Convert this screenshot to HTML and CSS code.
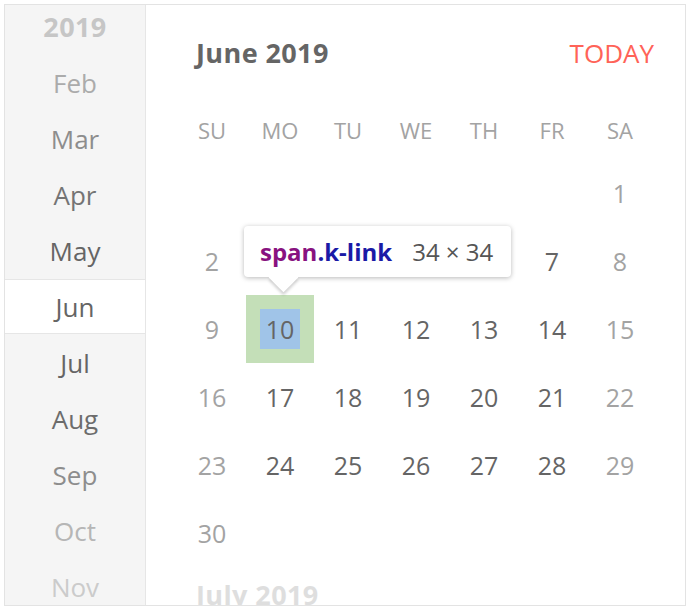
FILE: index.html
```html
<!DOCTYPE html>
<html lang="en">
<head>
<meta charset="utf-8">
<title>Calendar</title>
<link rel="stylesheet" href="styles.css">
</head>
<body>
<div class="calendar">
  <div class="nav">
    <div class="nav-highlight"></div>
    <ul class="nav-list">
      <li class="nav-item year f1">2019</li>
      <li class="nav-item f2">Feb</li>
      <li class="nav-item f3">Mar</li>
      <li class="nav-item f4">Apr</li>
      <li class="nav-item f5">May</li>
      <li class="nav-item f5">Jun</li>
      <li class="nav-item f5">Jul</li>
      <li class="nav-item f6">Aug</li>
      <li class="nav-item f3">Sep</li>
      <li class="nav-item f7">Oct</li>
      <li class="nav-item f8">Nov</li>
    </ul>
  </div>
  <div class="main">
    <div class="header">
      <span class="title">June 2019</span>
      <span class="today">TODAY</span>
    </div>
    <div class="weekdays">
      <span>SU</span><span>MO</span><span>TU</span><span>WE</span><span>TH</span><span>FR</span><span>SA</span>
    </div>
    <div class="days">
      <span class="cell"></span><span class="cell"></span><span class="cell"></span><span class="cell"></span><span class="cell"></span><span class="cell"></span><span class="cell we"><span class="link">1</span></span>
      <span class="cell we"><span class="link">2</span></span><span class="cell"><span class="link">3</span></span><span class="cell"><span class="link">4</span></span><span class="cell"><span class="link">5</span></span><span class="cell"><span class="link">6</span></span><span class="cell"><span class="link">7</span></span><span class="cell we"><span class="link">8</span></span>
      <span class="cell we"><span class="link">9</span></span><span class="cell inspected"><span class="link">10</span></span><span class="cell"><span class="link">11</span></span><span class="cell"><span class="link">12</span></span><span class="cell"><span class="link">13</span></span><span class="cell"><span class="link">14</span></span><span class="cell we"><span class="link">15</span></span>
      <span class="cell we"><span class="link">16</span></span><span class="cell"><span class="link">17</span></span><span class="cell"><span class="link">18</span></span><span class="cell"><span class="link">19</span></span><span class="cell"><span class="link">20</span></span><span class="cell"><span class="link">21</span></span><span class="cell we"><span class="link">22</span></span>
      <span class="cell we"><span class="link">23</span></span><span class="cell"><span class="link">24</span></span><span class="cell"><span class="link">25</span></span><span class="cell"><span class="link">26</span></span><span class="cell"><span class="link">27</span></span><span class="cell"><span class="link">28</span></span><span class="cell we"><span class="link">29</span></span>
      <span class="cell we"><span class="link">30</span></span>
    </div>
    <div class="next-title">July 2019</div>
  </div>
  <div class="tooltip">
    <span class="tag">span</span><span class="cls">.k-link</span><span class="size">34 × 34</span>
  </div>
</div>
</body>
</html>
```
FILE: styles.css
```css
* { box-sizing: border-box; }
html, body { background: #ffffff; }
body {
  margin: 0;
  padding: 4px;
  font-family: "Open Sans", "Noto Sans", sans-serif;
  color: #656565;
}
.calendar {
  position: relative;
  width: 682px;
  height: 602px;
  border: 1px solid #e3e3e3;
  display: flex;
  overflow: hidden;
  background: #fff;
}
.nav {
  position: relative;
  width: 141px;
  flex: none;
  background: #f5f5f5;
  border-right: 1px solid #e6e6e6;
  overflow: hidden;
}
.nav-highlight {
  position: absolute;
  left: 0;
  top: 274px;
  width: 141px;
  height: 55px;
  background: #fff;
  border-top: 1px solid #e6e6e6;
  border-bottom: 1px solid #e6e6e6;
}
.nav-list {
  position: relative;
  list-style: none;
  margin: -6px 0 0;
  padding: 0;
}
.nav-item {
  height: 56px;
  line-height: 56px;
  text-align: center;
  font-size: 26px;
}
.nav-item.year {
  font-weight: 700;
  font-size: 27px;
  letter-spacing: 0.4px;
}
.f1 { color: #c6c6c6; }
.f2 { color: #ababab; }
.f3 { color: #8d8d8d; }
.f4 { color: #747474; }
.f5 { color: #656565; }
.f6 { color: #6c6c6c; }
.f7 { color: #b6b6b6; }
.f8 { color: #cbcbcb; }
.main {
  flex: 1;
  padding: 0 31px 0 32px;
}
.header {
  display: flex;
  justify-content: space-between;
  align-items: center;
  height: 82px;
  padding: 14px 0 0 18px;
  line-height: 68px;
}
.title {
  font-size: 27px;
  font-weight: 700;
  letter-spacing: 0.4px;
  color: #656565;
}
.today {
  font-size: 26px;
  color: #ff6358;
}
.weekdays {
  display: grid;
  grid-template-columns: repeat(7, 68px);
  height: 72px;
  padding-bottom: 14px;
  align-items: end;
  line-height: 30px;
  font-size: 22px;
  color: #a3a3a3;
  text-align: center;
}
.days {
  display: grid;
  grid-template-columns: repeat(7, 68px);
  grid-auto-rows: 68px;
  font-size: 25px;
}
.cell {
  display: flex;
  align-items: center;
  justify-content: center;
  color: #656565;
}
.cell.we { color: #a3a3a3; }
.link {
  display: flex;
  align-items: center;
  justify-content: center;
  width: 40px;
  height: 40px;
}
.cell.inspected { background: #c4dfb8; }
.cell.inspected .link { background: #a0c4e8; }
.next-title {
  font-size: 27px;
  font-weight: 700;
  letter-spacing: 0.4px;
  color: #dedede;
  line-height: 56px;
  padding-left: 18px;
}
.tooltip {
  position: absolute;
  left: 239px;
  top: 221px;
  width: 267px;
  height: 51px;
  background: #fff;
  border-radius: 4px;
  box-shadow: 0 1px 5px rgba(0, 0, 0, 0.28);
  display: flex;
  align-items: center;
  padding-left: 16px;
  font-size: 24px;
  white-space: nowrap;
}
.tooltip::before {
  content: "";
  position: absolute;
  left: 29px;
  bottom: -11px;
  width: 21px;
  height: 21px;
  background: #fff;
  transform: rotate(45deg);
  box-shadow: 2px 2px 3px rgba(0, 0, 0, 0.18);
}
.tooltip::after {
  content: "";
  position: absolute;
  left: 20px;
  right: 20px;
  top: 0;
  bottom: 0;
  background: #fff;
  border-radius: 4px;
}
.tooltip span { position: relative; z-index: 1; }
.tag { color: #881280; font-weight: 700; }
.cls { color: #1a1aa6; font-weight: 700; }
.size { color: #555555; margin-left: 20px; }
```
